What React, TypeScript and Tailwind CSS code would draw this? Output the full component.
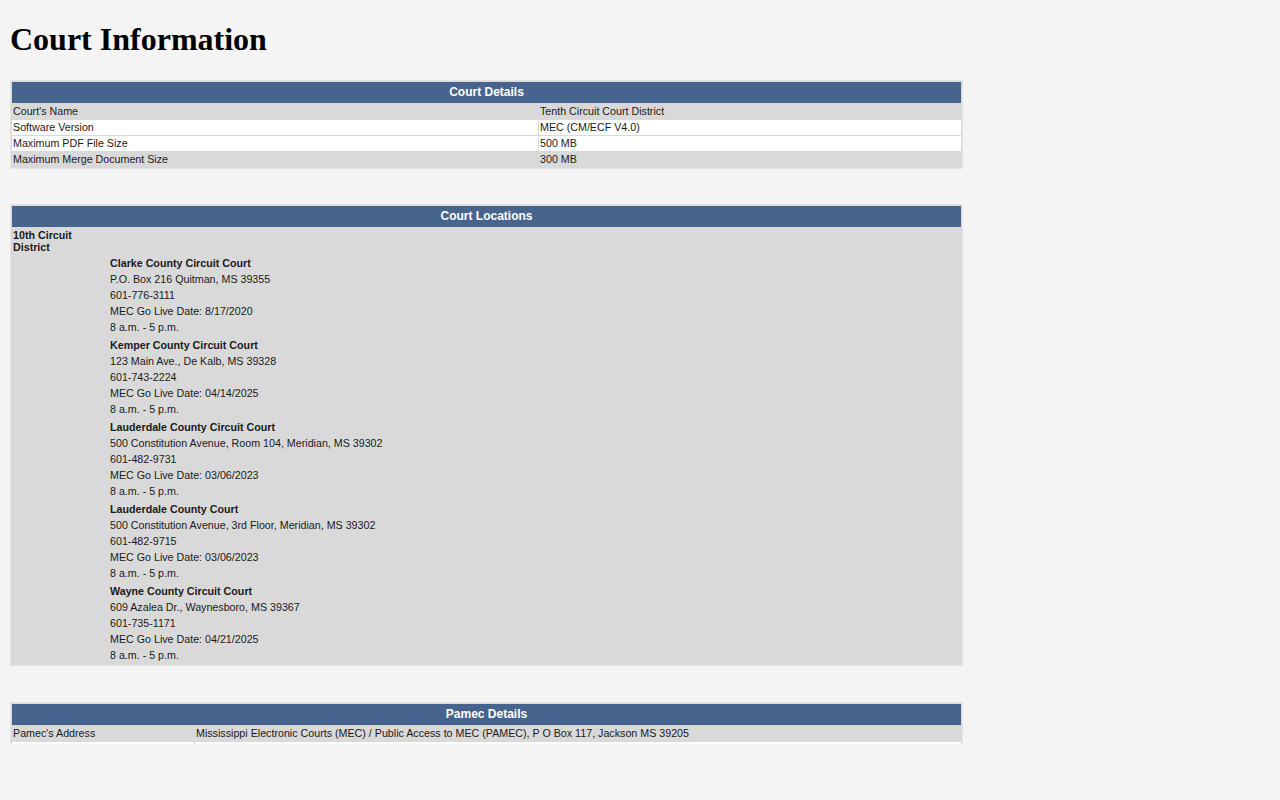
const courtDetails = [
  { label: "Court's Name", value: "Tenth Circuit Court District", white: false },
  { label: "Software Version", value: "MEC (CM/ECF V4.0)", white: true },
  { label: "Maximum PDF File Size", value: "500 MB", white: true },
  { label: "Maximum Merge Document Size", value: "300 MB", white: false },
];

const courts = [
  {
    name: "Clarke County Circuit Court",
    address: "P.O. Box 216 Quitman, MS 39355",
    phone: "601-776-3111",
    live: "MEC Go Live Date: 8/17/2020",
  },
  {
    name: "Kemper County Circuit Court",
    address: "123 Main Ave., De Kalb, MS 39328",
    phone: "601-743-2224",
    live: "MEC Go Live Date: 04/14/2025",
  },
  {
    name: "Lauderdale County Circuit Court",
    address: "500 Constitution Avenue, Room 104, Meridian, MS 39302",
    phone: "601-482-9731",
    live: "MEC Go Live Date: 03/06/2023",
  },
  {
    name: "Lauderdale County Court",
    address: "500 Constitution Avenue, 3rd Floor, Meridian, MS 39302",
    phone: "601-482-9715",
    live: "MEC Go Live Date: 03/06/2023",
  },
  {
    name: "Wayne County Circuit Court",
    address: "609 Azalea Dr., Waynesboro, MS 39367",
    phone: "601-735-1171",
    live: "MEC Go Live Date: 04/21/2025",
  },
];

const HeaderRow = ({ title }: { title: string }) => (
  <tr>
    <th
      colSpan={2}
      className="h-[21px] bg-[#47648f] p-0 text-center text-[12px] font-bold leading-[21px] text-white"
    >
      {title}
    </th>
  </tr>
);

const App = () => {
  return (
    <div className="min-h-[800px] bg-[#f4f4f4] font-['Liberation_Sans',Arial,sans-serif] text-[10.7px] text-[#1a1a1a]">
      <div className="h-[744px] overflow-hidden px-[10px]">
        <h1 className="mt-[21px] mb-[23px] font-['Liberation_Serif','Times_New_Roman',serif] text-[32px] font-bold leading-[36px] text-black">
          Court Information
        </h1>

        <table className="w-[953px] table-fixed border-separate border-spacing-[1px] border border-[#e4e4e4] bg-[#d9d9d9]">
          <colgroup>
            <col className="w-[526px]" />
            <col />
          </colgroup>
          <tbody>
            <HeaderRow title="Court Details" />
            {courtDetails.map((row) => (
              <tr key={row.label}>
                <td className={`h-[15px] px-[1px] py-0 align-middle leading-[15px] ${row.white ? "bg-white" : ""}`}>
                  {row.label}
                </td>
                <td className={`h-[15px] px-[1px] py-0 align-middle leading-[15px] ${row.white ? "bg-white" : ""}`}>
                  {row.value}
                </td>
              </tr>
            ))}
          </tbody>
        </table>

        <div className="h-[35px]" />

        <table className="w-[953px] table-fixed border-separate border-spacing-[1px] border border-[#e4e4e4] bg-[#d9d9d9]">
          <colgroup>
            <col className="w-[95px]" />
            <col />
          </colgroup>
          <tbody>
            <HeaderRow title="Court Locations" />
            <tr>
              <td className="px-[1px] pt-[1px] pb-0 align-top font-bold leading-[12px]">
                10th Circuit District
              </td>
              <td />
            </tr>
            <tr>
              <td />
              <td className="py-[1px] pr-[1px] pl-[2px]">
                <div className="flex flex-col gap-[2px]">
                  {courts.map((c) => (
                    <div key={c.name} className="flex flex-col leading-[16px]">
                      <div className="font-bold">{c.name}</div>
                      <div>{c.address}</div>
                      <div>{c.phone}</div>
                      <div>{c.live}</div>
                      <div>8 a.m. - 5 p.m.</div>
                    </div>
                  ))}
                </div>
              </td>
            </tr>
          </tbody>
        </table>

        <div className="h-[36px]" />

        <table className="w-[953px] table-fixed border-separate border-spacing-[1px] border border-[#e4e4e4] bg-[#d9d9d9]">
          <colgroup>
            <col className="w-[182px]" />
            <col />
          </colgroup>
          <tbody>
            <HeaderRow title="Pamec Details" />
            <tr>
              <td className="h-[15px] px-[1px] py-0 leading-[15px]">Pamec's Address</td>
              <td className="h-[15px] px-[1px] py-0 leading-[15px]">
                Mississippi Electronic Courts (MEC) / Public Access to MEC (PAMEC), P O Box 117, Jackson MS 39205
              </td>
            </tr>
            <tr>
              <td className="h-[15px] bg-white px-[1px] py-0 leading-[15px]"></td>
              <td className="h-[15px] bg-white px-[1px] py-0 leading-[15px]"></td>
            </tr>
          </tbody>
        </table>
      </div>
    </div>
  );
};

export default App;
